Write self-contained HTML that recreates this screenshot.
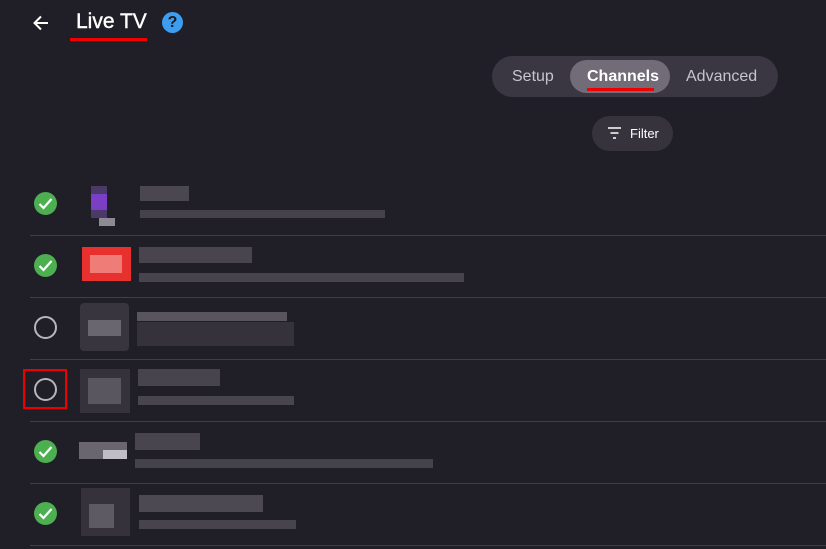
<!DOCTYPE html><html><head><style>
body{margin:0;width:826px;height:549px;background:#201e26;font-family:"Liberation Sans",sans-serif;position:relative;overflow:hidden}
.a{position:absolute}
.sep{position:absolute;left:30px;right:0;height:1px;background:#403e46}
.ck{position:absolute;left:34px;width:23px;height:23px;border-radius:50%;background:#4caf50}
.ck svg{position:absolute;left:4px;top:5px}
.oc{position:absolute;left:34px;width:19px;height:19px;border-radius:50%;border:2px solid #b8b6bc}
.b{position:absolute}
</style></head><body>
<svg class="a" style="left:32px;top:14px" width="18" height="18" viewBox="0 0 18 18"><path d="M16 9H3M9 2.5L2.5 9 9 15.5" stroke="#fff" stroke-width="2" fill="none"/></svg>
<div class="a" style="left:76px;top:10px;font-size:21px;color:#fff;-webkit-text-stroke:0.4px #fff">Live TV</div>
<div class="a" style="left:70px;top:38px;width:77px;height:3px;background:#e00"></div>
<div class="a" style="left:162px;top:12px;width:21px;height:21px;border-radius:50%;background:#3d9ef0;color:#1a1a20;font-weight:bold;font-size:16px;text-align:center;line-height:21px">?</div>
<div class="a" style="left:492px;top:56px;width:286px;height:41px;border-radius:21px;background:#3a3642"></div>
<div class="a" style="left:570px;top:60px;width:100px;height:33px;border-radius:17px;background:#716c78"></div>
<div class="a" style="left:512px;top:68px;font-size:16px;color:#c8c4cc">Setup</div>
<div class="a" style="left:587px;top:68px;font-size:16px;color:#fff;font-weight:bold">Channels</div>
<div class="a" style="left:587px;top:88px;width:67px;height:3px;background:#e00"></div>
<div class="a" style="left:686px;top:68px;font-size:16px;color:#c8c4cc">Advanced</div>
<div class="a" style="left:592px;top:116px;width:81px;height:35px;border-radius:18px;background:#36333d"></div>
<svg class="a" style="left:607px;top:126px" width="15" height="14"><path d="M1 2h13M3.5 7h8M6 12h3" stroke="#fff" stroke-width="1.6"/></svg>
<div class="a" style="left:630px;top:126px;font-size:13px;color:#fff">Filter</div>

<div class="sep" style="top:235px"></div><div class="sep" style="top:297px"></div><div class="sep" style="top:359px"></div><div class="sep" style="top:421px"></div><div class="sep" style="top:483px"></div><div class="sep" style="top:545px"></div>

<div class="ck" style="top:192px"><svg width="15" height="13"><path d="M1.5 7l4 4 8-9" stroke="#fff" stroke-width="2.2" fill="none"/></svg></div>
<div class="ck" style="top:254px"><svg width="15" height="13"><path d="M1.5 7l4 4 8-9" stroke="#fff" stroke-width="2.2" fill="none"/></svg></div>
<div class="oc" style="top:316px"></div>
<div class="oc" style="top:378px"></div>
<div class="a" style="left:23px;top:369px;width:44px;height:40px;border:2px solid #e00;box-sizing:border-box"></div>
<div class="ck" style="top:440px"><svg width="15" height="13"><path d="M1.5 7l4 4 8-9" stroke="#fff" stroke-width="2.2" fill="none"/></svg></div>
<div class="ck" style="top:502px"><svg width="15" height="13"><path d="M1.5 7l4 4 8-9" stroke="#fff" stroke-width="2.2" fill="none"/></svg></div>

<div class="b" style="left:91px;top:186px;width:16px;height:32px;background:#4a3a68"></div>
<div class="b" style="left:91px;top:194px;width:16px;height:16px;background:#7a3fc4"></div>
<div class="b" style="left:99px;top:218px;width:16px;height:8px;background:#8e8a94"></div>
<div class="b" style="left:140px;top:186px;width:49px;height:15px;background:#4a4750"></div>
<div class="b" style="left:140px;top:210px;width:245px;height:8px;background:#45424b"></div>
<div class="b" style="left:82px;top:247px;width:49px;height:34px;background:#e8302e"></div>
<div class="b" style="left:90px;top:255px;width:32px;height:18px;background:#f07c78"></div>
<div class="b" style="left:139px;top:247px;width:113px;height:16px;background:#48454e"></div>
<div class="b" style="left:139px;top:273px;width:325px;height:9px;background:#47444d"></div>
<div class="b" style="left:80px;top:303px;width:49px;height:48px;border-radius:4px;background:#38353f"></div>
<div class="b" style="left:88px;top:320px;width:33px;height:16px;background:#6a6670"></div>
<div class="b" style="left:137px;top:312px;width:150px;height:9px;background:#58555e"></div>
<div class="b" style="left:137px;top:322px;width:157px;height:24px;background:#35323b"></div>
<div class="b" style="left:80px;top:369px;width:50px;height:44px;background:#35323b"></div>
<div class="b" style="left:88px;top:378px;width:33px;height:26px;background:#5a5660"></div>
<div class="b" style="left:138px;top:369px;width:82px;height:17px;background:#47444d"></div>
<div class="b" style="left:138px;top:396px;width:156px;height:9px;background:#48454e"></div>
<div class="b" style="left:79px;top:442px;width:48px;height:17px;background:#6a6670"></div>
<div class="b" style="left:103px;top:450px;width:24px;height:9px;background:#c0bec4"></div>
<div class="b" style="left:135px;top:433px;width:65px;height:17px;background:#48454e"></div>
<div class="b" style="left:135px;top:459px;width:298px;height:9px;background:#45424b"></div>
<div class="b" style="left:81px;top:488px;width:49px;height:48px;background:#35323b"></div>
<div class="b" style="left:89px;top:504px;width:25px;height:24px;background:#5e5a64"></div>
<div class="b" style="left:139px;top:495px;width:124px;height:17px;background:#4c4952"></div>
<div class="b" style="left:139px;top:520px;width:157px;height:9px;background:#47444d"></div>
</body></html>
